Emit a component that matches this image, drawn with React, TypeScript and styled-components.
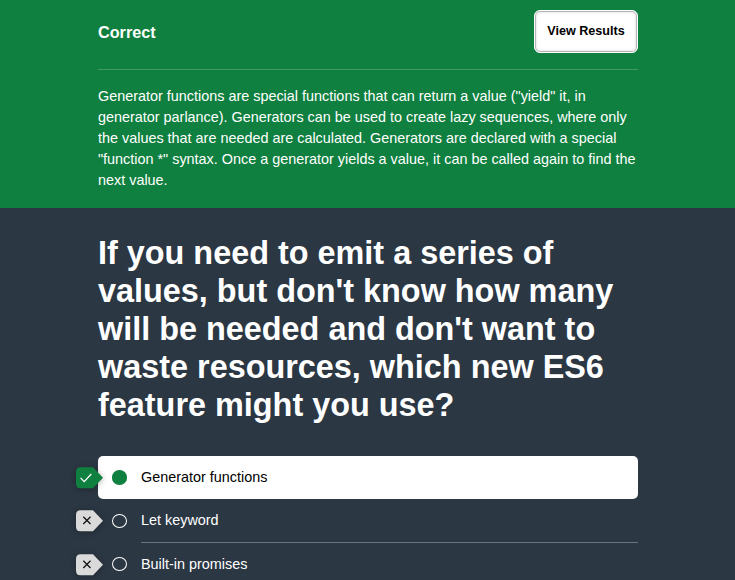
import React from 'react';
import styled, { createGlobalStyle } from 'styled-components';

const GlobalStyle = createGlobalStyle`
  * { box-sizing: border-box; }
  body {
    margin: 0;
    height: 580px;
    overflow: hidden;
    background: #2b3743;
    color: #fff;
    font-family: "Liberation Sans", Arial, sans-serif;
    font-size: 14.4px;
    line-height: 21px;
  }
`;

const Banner = styled.section`
  height: 208px;
  padding: 0 97px 0 98px;
  background: #108040;
`;

const BannerHeader = styled.header`
  display: flex;
  justify-content: space-between;
  height: 70px;
  padding-top: 10px;
  border-bottom: 1px solid #409966;
`;

const Verdict = styled.h2`
  margin: 12px 0 0;
  font-size: 16.2px;
  line-height: 21px;
`;

const ResultsButton = styled.button`
  width: 104px;
  height: 43px;
  padding: 0 0 2px;
  border: 1px solid #fff;
  border-radius: 6px;
  background: #fff;
  box-shadow: inset 0 0 0 1px #b4b4b4, inset 0 0 3px 1px #d8d8d8;
  color: #000;
  font: bold 12.6px "Liberation Sans", Arial, sans-serif;
`;

const Explanation = styled.p`
  margin: 16px 0 0;
`;

const Quiz = styled.main`
  padding: 26px 97px 0 98px;
`;

const Question = styled.h1`
  margin: 0 0 32px;
  font-size: 32.4px;
  line-height: 38px;
`;

const Answers = styled.ul`
  margin: 0;
  padding: 0;
  list-style: none;
`;

const Answer = styled.li<{ $correct: boolean }>`
  position: relative;
  display: flex;
  height: ${p => (p.$correct ? 43.2 : 43.6)}px;
  padding-left: 14px;
  gap: 14px;
  border-radius: 5px;
  background: ${p => (p.$correct ? '#fff' : 'transparent')};
  color: ${p => (p.$correct ? '#000' : '#fff')};
`;

const Radio = styled.span<{ $checked: boolean }>`
  width: 15px;
  height: 14.2px;
  margin-top: 14.4px;
  border: 1px solid ${p => (p.$checked ? '#108040' : '#fff')};
  border-radius: 50%;
  background: ${p => (p.$checked ? '#108040' : 'transparent')};
`;

const Label = styled.span<{ $divided: boolean }>`
  flex: 1;
  padding-top: 11px;
  border-bottom: ${p => (p.$divided ? '1px solid #6b737b' : 'none')};
`;

const Marker = styled.svg`
  position: absolute;
  left: -22px;
  top: 11px;
  overflow: visible;
  filter: drop-shadow(0 1px 3px rgba(0, 0, 0, 0.3));
`;

const answers = [
  { text: 'Generator functions', correct: true },
  { text: 'Let keyword', correct: false },
  { text: 'Built-in promises', correct: false },
];

const AnswerMarker = ({ correct }: { correct: boolean }) => (
  <Marker width="27" height="22" viewBox="0 0 27 22">
    <path
      d="M4.5 0.3H17L27 10.7L17 21.2H4.5Q0 21.2 0 16.7V4.8Q0 0.3 4.5 0.3Z"
      fill={correct ? '#108040' : '#dadada'}
    />
    <path
      d={correct ? 'M4.6 10.9L8.2 14.6L15.3 7' : 'M7.3 6.8L14.5 14M14.5 6.8L7.3 14'}
      fill="none"
      stroke={correct ? '#fff' : '#111'}
      strokeWidth="1.25"
    />
  </Marker>
);

export default function App() {
  return (
    <>
      <GlobalStyle />
      <Banner>
        <BannerHeader>
          <Verdict>Correct</Verdict>
          <ResultsButton>View Results</ResultsButton>
        </BannerHeader>
        <Explanation>
          Generator functions are special functions that can return a value ("yield" it, in
          generator parlance). Generators can be used to create lazy sequences, where only the
          values that are needed are calculated. Generators are declared with a special
          "function *" syntax. Once a generator yields a value, it can be called again to find
          the next value.
        </Explanation>
      </Banner>
      <Quiz>
        <Question>
          If you need to emit a series of values, but don't know how many will be needed and
          don't want to waste resources, which new ES6 feature might you use?
        </Question>
        <Answers>
          {answers.map(({ text, correct }) => (
            <Answer key={text} $correct={correct}>
              <AnswerMarker correct={correct} />
              <Radio $checked={correct} />
              <Label $divided={!correct}>{text}</Label>
            </Answer>
          ))}
        </Answers>
      </Quiz>
    </>
  );
}
